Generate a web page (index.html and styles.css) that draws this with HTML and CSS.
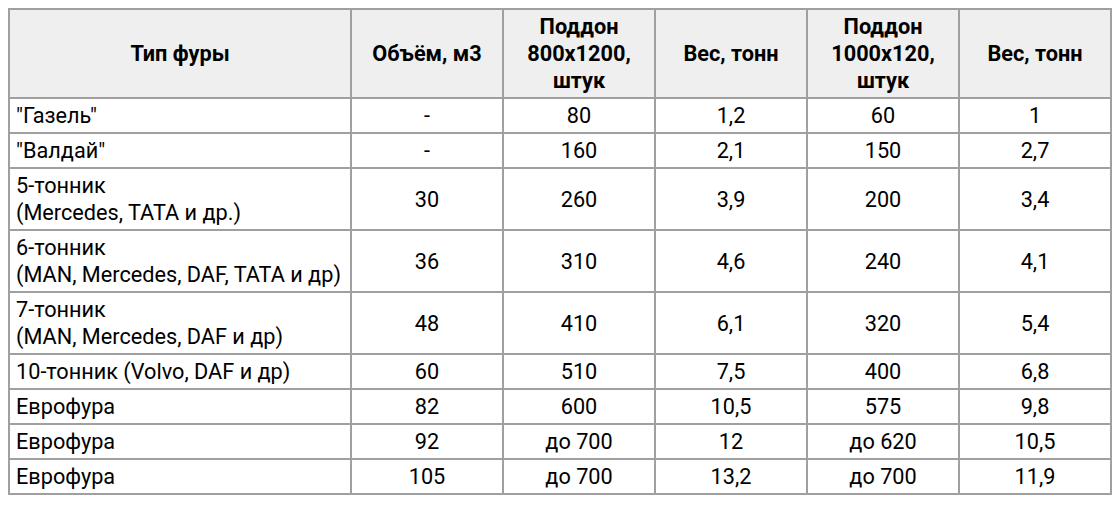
FILE: index.html
```html
<!DOCTYPE html>
<html lang="ru">
<head>
<meta charset="utf-8">
<link rel="stylesheet" href="styles.css">
</head>
<body>
<table class="trucks">
  <colgroup>
    <col class="c-type">
    <col class="c-num"><col class="c-num"><col class="c-num"><col class="c-num"><col class="c-num">
  </colgroup>
  <thead>
    <tr>
      <th>Тип фуры</th>
      <th>Объём, м3</th>
      <th>Поддон<br>800x1200,<br>штук</th>
      <th>Вес, тонн</th>
      <th>Поддон<br>1000x120,<br>штук</th>
      <th>Вес, тонн</th>
    </tr>
  </thead>
  <tbody>
    <tr><td class="name">"Газель"</td><td>-</td><td>80</td><td>1,2</td><td>60</td><td>1</td></tr>
    <tr><td class="name">"Валдай"</td><td>-</td><td>160</td><td>2,1</td><td>150</td><td>2,7</td></tr>
    <tr><td class="name">5-тонник<br>(Mercedes, TATA и др.)</td><td>30</td><td>260</td><td>3,9</td><td>200</td><td>3,4</td></tr>
    <tr><td class="name">6-тонник<br>(MAN, Mercedes, DAF, TATA и др)</td><td>36</td><td>310</td><td>4,6</td><td>240</td><td>4,1</td></tr>
    <tr><td class="name">7-тонник<br>(MAN, Mercedes, DAF и др)</td><td>48</td><td>410</td><td>6,1</td><td>320</td><td>5,4</td></tr>
    <tr><td class="name">10-тонник (Volvo, DAF и др)</td><td>60</td><td>510</td><td>7,5</td><td>400</td><td>6,8</td></tr>
    <tr><td class="name">Еврофура</td><td>82</td><td>600</td><td>10,5</td><td>575</td><td>9,8</td></tr>
    <tr><td class="name">Еврофура</td><td>92</td><td>до 700</td><td>12</td><td>до 620</td><td>10,5</td></tr>
    <tr><td class="name">Еврофура</td><td>105</td><td>до 700</td><td>13,2</td><td>до 700</td><td>11,9</td></tr>
  </tbody>
</table>
</body>
</html>
```
FILE: styles.css
```css
body {
  margin: 8px;
  background: #ffffff;
  font-family: Roboto, "Liberation Sans", Arial, sans-serif;
  color: #000000;
}
.trucks {
  border-collapse: collapse;
  table-layout: fixed;
  width: 1104px;
  font-size: 21.7px;
  line-height: 27px;
}
.c-type { width: 342px; }
.c-num { width: 152px; }
.trucks th,
.trucks td {
  border: 2px solid #a0a0a0;
  padding: 3px 6px;
  text-align: center;
  vertical-align: middle;
}
.trucks th {
  background: #efefef;
  font-weight: 700;
}
.trucks td.name {
  text-align: left;
}
```
